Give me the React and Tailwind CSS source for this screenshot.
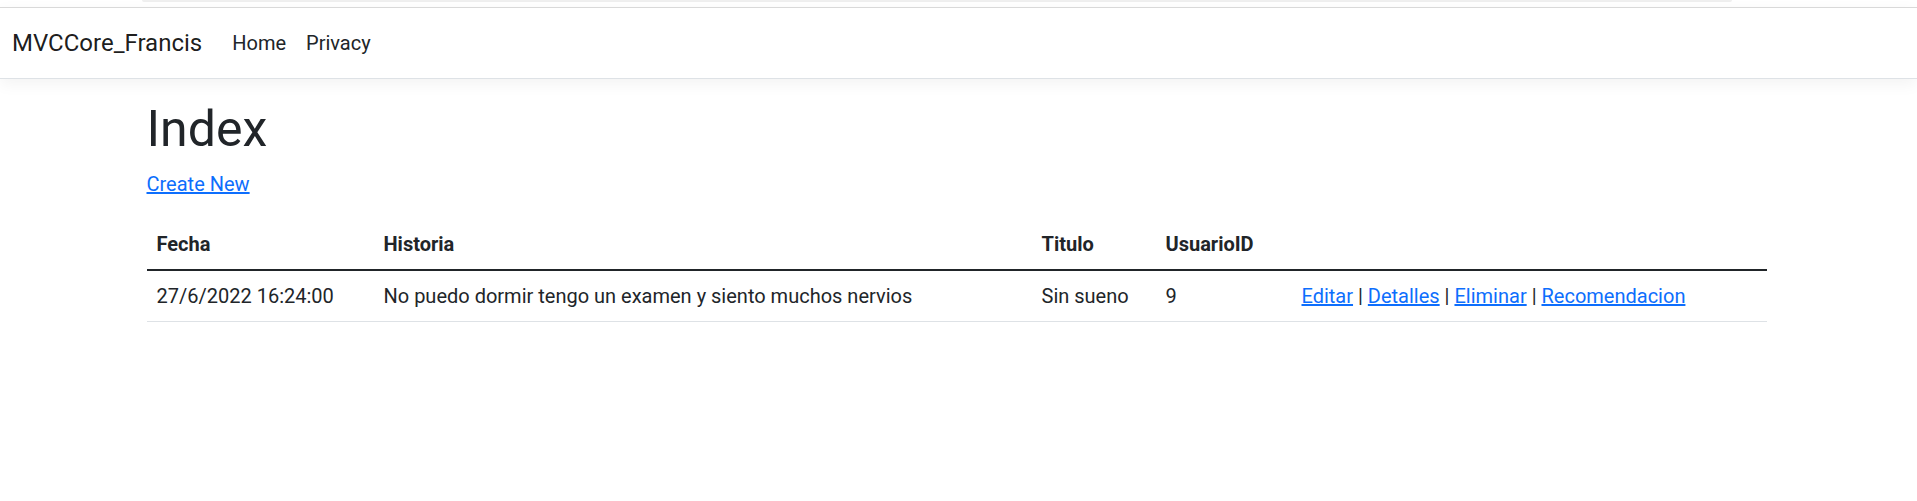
import React from "react";

const rows = [
  {
    fecha: "27/6/2022 16:24:00",
    historia: "No puedo dormir tengo un examen y siento muchos nervios",
    titulo: "Sin sueno",
    usuarioId: 9,
  },
];

function NavBar() {
  return (
    <header className="relative z-10 h-[72px] bg-white border-t border-b border-t-[#d9d9d9] border-b-[#dee2e6] shadow-[0_5px_15px_rgba(0,0,0,0.05)]">
      <div className="h-full flex items-center px-[12px]">
        <a href="#" className="text-[24px] leading-[37px] text-black/90 mr-[20px]">
          MVCCore_Francis
        </a>
        <nav className="flex items-center">
          <a href="#" className="text-[20px] leading-[30px] text-[#212529] px-[10px]">
            Home
          </a>
          <a href="#" className="text-[20px] leading-[30px] text-[#212529] px-[10px]">
            Privacy
          </a>
        </nav>
      </div>
    </header>
  );
}

function Actions() {
  return (
    <span>
      <a href="#" className="text-[#0d6efd] underline">Editar</a> |{" "}
      <a href="#" className="text-[#0d6efd] underline">Detalles</a> |{" "}
      <a href="#" className="text-[#0d6efd] underline">Eliminar</a> |{" "}
      <a href="#" className="text-[#0d6efd] underline">Recomendacion</a>
    </span>
  );
}

export default function App() {
  return (
    <div
      className="min-h-screen bg-white text-[#212529] text-[20px] leading-[30px]"
      style={{ fontFamily: '"Segoe UI", Roboto, "Liberation Sans", sans-serif' }}
    >
      {/* leftover strip above the navbar */}
      <div className="h-[7px] pl-[142px]">
        <div className="w-[1590px] h-[2px] bg-[#efefef] rounded-b-[3px]" />
      </div>

      <NavBar />

      <main className="max-w-[1650px] mx-auto pl-[13px] pr-[17px] pt-[20px]">
        <h1 className="text-[50px] leading-[60px] font-normal mb-[10px]">Index</h1>
        <p className="mb-[20px]">
          <a href="#" className="text-[#0d6efd] underline">Create New</a>
        </p>

        <table className="w-full table-fixed border-collapse text-left">
          <colgroup>
            <col className="w-[227px]" />
            <col className="w-[658px]" />
            <col className="w-[124px]" />
            <col className="w-[136px]" />
            <col />
          </colgroup>
          <thead>
            <tr className="border-b-2 border-[#212529]">
              <th className="p-[10px] font-bold">Fecha</th>
              <th className="p-[10px] font-bold">Historia</th>
              <th className="p-[10px] font-bold">Titulo</th>
              <th className="p-[10px] font-bold">UsuarioID</th>
              <th className="p-[10px]"></th>
            </tr>
          </thead>
          <tbody>
            {rows.map((r, i) => (
              <tr key={i} className="border-b border-[#dee2e6]">
                <td className="p-[10px] whitespace-nowrap">{r.fecha}</td>
                <td className="p-[10px]">{r.historia}</td>
                <td className="p-[10px]">{r.titulo}</td>
                <td className="p-[10px]">{r.usuarioId}</td>
                <td className="p-[10px]">
                  <Actions />
                </td>
              </tr>
            ))}
          </tbody>
        </table>
      </main>
    </div>
  );
}
